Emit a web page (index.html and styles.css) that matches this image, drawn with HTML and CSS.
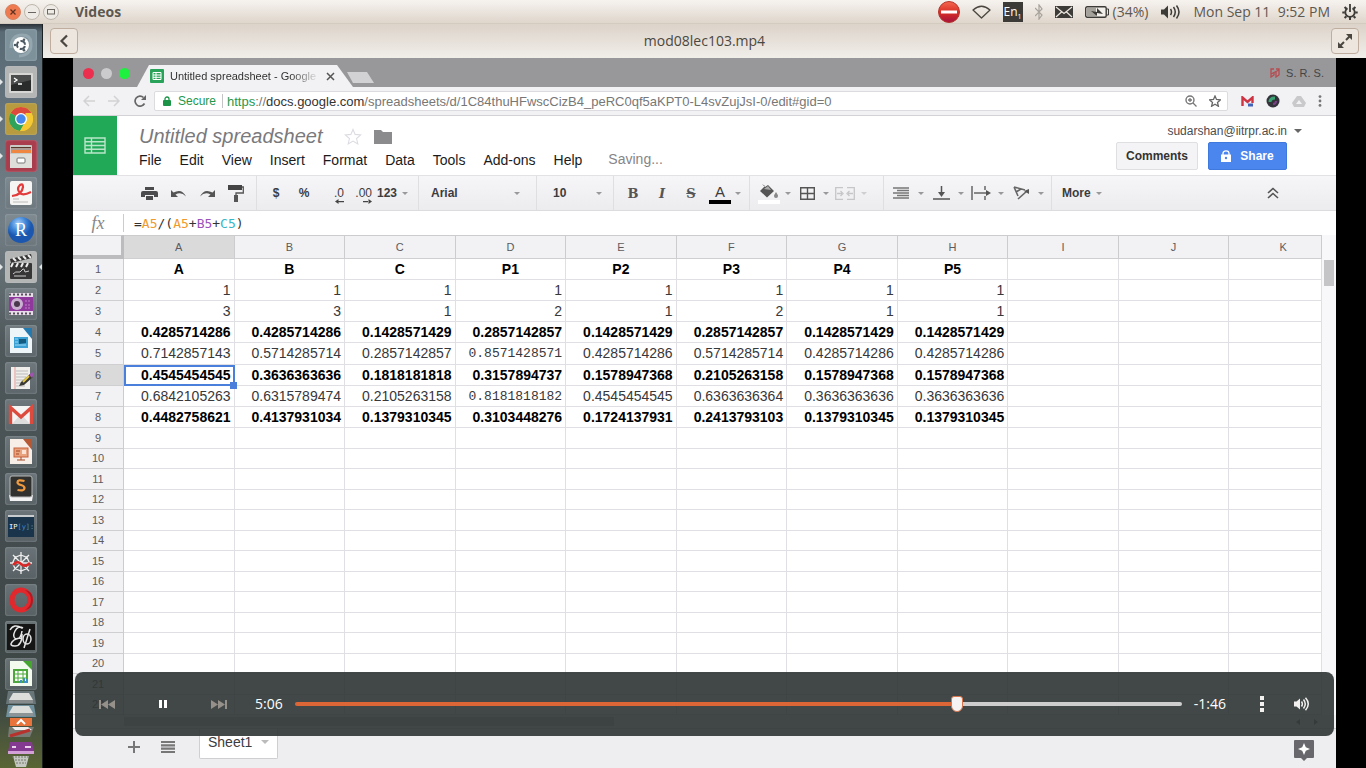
FILE: index.html
```html
<!DOCTYPE html>
<html lang="en">
<head>
<meta charset="utf-8">
<title>Videos</title>
<link rel="stylesheet" href="styles.css">
</head>
<body class="desktop">
<header class="panel">
  <div class="window-buttons">
    <button class="wbtn wbtn-close" aria-label="Close"><svg width="8" height="8" viewBox="0 0 8 8"><path d="M1.5 1.5l5 5M6.500 1.500l-5 5" stroke="#5d3222" stroke-width="1.300"/></svg></button>
    <button class="wbtn" aria-label="Minimize"><svg width="8" height="8" viewBox="0 0 8 8"><path d="M0 4.500h8" stroke="#6b665f"/></svg></button>
    <button class="wbtn" aria-label="Maximize"><svg width="8" height="8" viewBox="0 0 8 8"><rect x=".5" y="1.500" width="7" height="4.500" fill="none" stroke="#6b665f"/></svg></button>
  </div>
  <h1 class="panel-title">Videos</h1>
  <div class="indicators">
    <svg width="22" height="22" viewBox="0 0 22 22"><defs><linearGradient id="stop" x2="0" y2="1"><stop offset="0" stop-color="#f4684f"/><stop offset=".5" stop-color="#d93025"/><stop offset="1" stop-color="#a5123c"/></linearGradient></defs><circle cx="11" cy="11" r="10.500" fill="url(#stop)" stroke="#b5352c"/><rect x="3" y="9.500" width="16" height="3" fill="#fff"/></svg>
    <svg width="19" height="14" viewBox="0 0 19 14"><path d="M1 5Q9.500-2.500 18 5L9.500 13z" fill="none" stroke="#4b4740" stroke-width="1.300" stroke-linejoin="round"/></svg>
    <span class="keyboard">En<sub>1</sub></span>
    <svg width="8" height="16" viewBox="0 0 8 16"><path d="M0 4l7 7-3 4V1l3 4-7 7" fill="none" stroke="#a7a29b" stroke-width="1.200"/></svg>
    <svg width="18" height="12" viewBox="0 0 18 12"><rect width="18" height="12" fill="#3c3b37"/><path d="M1 1l8 6.500L17 1M1 11l5.500-5M17 11l-5.500-5" fill="none" stroke="#eee8e1" stroke-width="1.200"/></svg>
    <span class="battery"><svg width="24" height="12" viewBox="0 0 24 12"><rect x=".7" y=".7" width="20.500" height="10.600" rx="1.500" fill="#f3efea" stroke="#3c3b37" stroke-width="1.400"/><rect x="2" y="2" width="9" height="8" fill="#a5a19b"/><path d="M21.500 3h2v6h-2" fill="none" stroke="#3c3b37"/><path d="M6 5l6 1V2l6 6-6-1v3z" fill="#3c3b37"/></svg>(34%)</span>
    <svg width="21" height="16" viewBox="0 0 21 16"><path d="M1 5.500h3l4-4v13l-4-4H1z" fill="#3c3b37"/><path d="M10.500 5q2 3 0 6M13.500 3q3.500 5 0 10M16.500 1.500q5 6.500 0 13" fill="none" stroke="#3c3b37" stroke-width="1.500"/></svg>
    <time class="clock">Mon Sep 11&nbsp; 9:52 PM</time>
    <svg width="16" height="16" viewBox="0 0 16 16"><path d="M5.500 4.200a4.700 4.700 0 1 0 5 0M8 0v8" fill="none" stroke="#3c3b37" stroke-width="1.800"/><path d="M.3 8.500h2.500M13.200 8.500h2.500M2.600 3l1.800 1.800M13.400 3l-1.800 1.800M2.600 14l1.800-1.800M13.400 14l-1.800-1.800M8 13v3" stroke="#3c3b37" stroke-width="2"/></svg>
  </div>
</header>

<div class="workspace">
<nav class="launcher" aria-label="Launcher">
  <button class="tile tile-dash" aria-label="Dash"><svg viewBox="0 0 32 32"><path d="M6 19Q6 6 17 6q9 0 9 8M26 14q1 12-12 13" fill="none" stroke="#a3b4ba" stroke-width="3" opacity=".6"/><circle cx="16" cy="16" r="8" fill="#fff"/><circle cx="16" cy="16" r="4" fill="none" stroke="#4c5961" stroke-width="2" stroke-dasharray="6.400 2" stroke-dashoffset="-1"/><g fill="#4c5961"><circle cx="10" cy="16" r="1.300"/><circle cx="19" cy="10.800" r="1.300"/><circle cx="19" cy="21.200" r="1.300"/></g></svg></button>
  <button class="tile tile-light running" aria-label="Terminal"><svg viewBox="0 0 32 32"><rect x="4" y="7" width="24" height="20" rx="1" fill="#d6d6d4"/><rect x="6" y="9" width="20" height="16" fill="#2a2c2b"/><path d="M6 9h20v5L6 19z" fill="#4b4d4c"/><path d="M9 12l3 2-3 2M13 18h4" fill="none" stroke="#fff" stroke-width="1.300"/></svg></button>
  <button class="tile tile-gold running" aria-label="Chrome"><svg viewBox="0 0 32 32"><circle cx="16" cy="16" r="12" fill="#f5c934"/><path d="M16 16L5.600 10A12 12 0 0 1 26.400 10z" fill="#dc4a3d"/><path d="M5.600 10A12 12 0 0 0 15 28l5-9-4-3z" fill="#2fa35a"/><path d="M26.400 10A12 12 0 0 1 15 28l5.500-9V10z" fill="#f5c934"/><circle cx="16" cy="16" r="6" fill="#fff"/><circle cx="16" cy="16" r="4.700" fill="#4688ee"/></svg></button>
  <button class="tile tile-red running" aria-label="Files"><svg viewBox="0 0 32 32"><rect x="5" y="5" width="22" height="23" rx="1" fill="#c9c9c5"/><rect x="6" y="7" width="20" height="6" fill="#59382a"/><path d="M6 10h20v3H6z" fill="#ef8740"/><path d="M6 9h20" stroke="#fff"/><rect x="5" y="14" width="22" height="14" fill="#dededb"/><rect x="12" y="18" width="8" height="5" rx="1" fill="#fff" stroke="#777"/></svg></button>
  <button class="tile" aria-label="Document viewer"><svg viewBox="0 0 32 32"><rect x="5" y="4" width="22" height="24" rx="2" fill="#f5f5f3"/><path d="M7 19q10-1 11-9 0-4-3-2-4 4 0 8 3 3 11-1" fill="none" stroke="#e23b3b" stroke-width="2.200"/><path d="M8 22h6M8 25h15" stroke="#bbb"/></svg></button>
  <button class="tile" aria-label="RStudio"><svg viewBox="0 0 32 32"><defs><radialGradient id="ball" cx=".4" cy=".25"><stop offset="0" stop-color="#a9d1fa"/><stop offset=".6" stop-color="#3d84d6"/><stop offset="1" stop-color="#1b57ae"/></radialGradient></defs><circle cx="16" cy="16" r="13" fill="url(#ball)"/><text x="16" y="22" class="r-letter">R</text></svg></button>
  <button class="tile tile-light running focused" aria-label="Videos"><svg viewBox="0 0 32 32"><path d="M5 8l21-5 1 4-21 5z" fill="#333"/><path d="M8 7l3 3M13 6l3 3M18 5l3 3M23 4l3 3" stroke="#eee" stroke-width="2"/><rect x="5" y="12" width="22" height="16" rx="1" fill="#363636"/><path d="M8 12l-2 4M13 12l-2 4M18 12l-2 4M23 12l-2 4" stroke="#eee" stroke-width="2"/><path d="M8 23q3-3 5-2t4-2 3 2l4-1M9 25h12" fill="none" stroke="#ccc" stroke-width="1"/></svg></button>
  <button class="tile" aria-label="Video editor"><svg viewBox="0 0 32 32"><rect x="4" y="5" width="24" height="22" fill="#e6dcea"/><path d="M4 6.500h24M4 25.500h24" stroke="#565058" stroke-width="2" stroke-dasharray="2 2"/><rect x="4" y="9" width="24" height="14" fill="#8f399d"/><circle cx="12" cy="16" r="6" fill="#cab3d0"/><circle cx="12" cy="16" r="3" fill="#49384e"/><path d="M20 13h6M20 17h6M20 20h6" stroke="#c080ca" stroke-dasharray="2 1"/></svg></button>
  <button class="tile" aria-label="Writer"><svg viewBox="0 0 32 32"><path d="M5 3h15l7 7v18H5z" fill="#eef5f9"/><path d="M18 3h9v11z" fill="#247aaf"/><rect x="9" y="12" width="14" height="11" fill="#3ca1d5"/><path d="M14 14h7v4l-7 1z" fill="#155a7f"/><path d="M10 14h3M10 17h3M10 20h11" stroke="#9bd7f1"/></svg></button>
  <button class="tile" aria-label="Text editor"><svg viewBox="0 0 32 32"><rect x="6" y="5" width="19" height="22" fill="#f0eeeb"/><path d="M10 5v22" stroke="#e79a96"/><path d="M11 9h12M11 12h12M11 15h10M11 18h7M11 21h6M11 24h9" stroke="#bbb"/><path d="M14 24l2-4 9-8 3 3-9 8z" fill="#393832"/><path d="M24 13l3-3 2 2-2 4z" fill="#9f54ad"/><path d="M18 20l6-6" stroke="#e5c745" stroke-width="2"/></svg></button>
  <button class="tile" aria-label="Gmail"><svg viewBox="0 0 32 32"><rect x="4" y="7" width="24" height="18" rx="1" fill="#f4f4f4"/><path d="M7 25l9-10 9 10" fill="#ddd"/><path d="M5.500 25V8.500L16 18 26.500 8.500V25" fill="none" stroke="#dd4b3e" stroke-width="3.400"/></svg></button>
  <button class="tile" aria-label="Impress"><svg viewBox="0 0 32 32"><path d="M5 3h15l7 7v18H5z" fill="#f8eee8"/><path d="M18 3h9v11z" fill="#b75834"/><rect x="9" y="12" width="14" height="9" fill="#e8a27e" stroke="#c7623c"/><path d="M11 15h4M11 18h3M16 21v3M12 24h8" stroke="#a44925"/><rect x="17" y="14" width="4" height="4" fill="#fbe2d5"/></svg></button>
  <button class="tile" aria-label="Sublime Text"><svg viewBox="0 0 32 32"><path d="M4 22l1 6h22l1-6z" fill="#f3f3f3"/><rect x="5" y="3" width="22" height="21" rx="2" fill="#30302f" stroke="#b7b9b8"/><path d="M19.500 8q-7-2-7 1.500 0 1.500 3.500 2.500t3.500 3q0 3.500-7 2" fill="none" stroke="#ef9a3e" stroke-width="2.300"/></svg></button>
  <button class="tile" aria-label="IPython"><svg viewBox="0 0 32 32"><rect x="3" y="5" width="26" height="22" fill="#19344b"/><rect x="3" y="5" width="26" height="2" fill="#c9ccce"/><text x="4" y="19" class="ip-letters">IP<tspan fill="#4d8ec3">[y]:</tspan></text></svg></button>
  <button class="tile" aria-label="Spyder"><svg viewBox="0 0 32 32"><g fill="none" stroke="#eee" stroke-width="1.300"><path d="M16 8l6 2.500 2.500 5.500-2.500 5.500-6 2.500-6-2.500L7.500 16l2.500-5.500zM16 5v22M5 16h22M8 8l16 16M24 8L8 24"/></g><path d="M8 18q4-5 8-1t9-1" fill="none" stroke="#db2726" stroke-width="2.500"/></svg></button>
  <button class="tile" aria-label="Opera"><svg viewBox="0 0 32 32"><ellipse cx="16" cy="16" rx="9" ry="10" fill="none" stroke="#e1282d" stroke-width="5"/><path d="M20 6q6 4 6 10t-6 10q8-1 8-10T20 6z" fill="#b51820"/></svg></button>
  <button class="tile" aria-label="Graph tool"><svg viewBox="0 0 32 32"><rect x="2" y="3" width="28" height="26" fill="#151515"/><g fill="none" stroke="#e6e6e6" stroke-width="1.500"><path d="M18 7q-5-3-8 3t1 8q5 0 6-8M5 9q4-7 12-2M17 13q0 12-7 12-6 0-3-4t10-4"/><ellipse cx="22" cy="18" rx="4" ry="5"/><path d="M25 8l-6 19"/></g></svg></button>
  <button class="tile" aria-label="Calc"><svg viewBox="0 0 32 32"><path d="M5 3h15l7 7v18H5z" fill="#f3faee"/><path d="M18 3h9v9z" fill="#46a52e"/><rect x="9" y="12" width="13" height="12" fill="#fff" stroke="#4ca83a" stroke-width="2"/><path d="M9 16h13M9 20h13M13 12v12M18 12v12" stroke="#4ca83a"/><path d="M16 25v-3M19 25v-5M22 25v-4" stroke="#3d91c4" stroke-width="2"/></svg></button>
  <div class="folded">
    <svg viewBox="0 0 32 76"><path d="M3 0h26l2 13H1z" fill="#68767a"/><path d="M8 2h16l4 7H4z" fill="#dcdedc"/><path d="M4 9h24v3H4z" fill="#888c8c"/><path d="M3 14h26l2 12H1z" fill="#71909d"/><path d="M8 15h16l4 7H4z" fill="#dcdedc"/><path d="M4 22h24v3H4z" fill="#8d9495"/><path d="M5 27h22v8H5z" fill="#e8733b"/><path d="M12 33l4-4 4 4" fill="none" stroke="#fff" stroke-width="2"/><path d="M4 36h25l-4 10H3z" fill="#777b73"/><path d="M7 36h16l4 3H10z" fill="#eee"/><path d="M5 45l20-6" stroke="#b8322d" stroke-width="3"/><path d="M5 51h22l2 10H3z" fill="#843a91"/><path d="M3 60h26v3H3z" fill="#d3a0d7"/><path d="M7 56h4M20 56h6" stroke="#ead2ed" stroke-width="2"/><path d="M8 65h16l-3 11H11z" fill="#c5c8c0"/><path d="M7 66h17M10 69h12M11 72h10" stroke="#747b6e" stroke-dasharray="2 1"/></svg>
  </div>
</nav>

<main class="player">
  <div class="player-head">
    <button class="head-btn" aria-label="Back"><svg width="10" height="14" viewBox="0 0 10 14"><path d="M8 1.500L2.500 7 8 12.500" fill="none" stroke="#4b4740" stroke-width="2.200"/></svg></button>
    <h2 class="file-name">mod08lec103.mp4</h2>
    <button class="head-btn" aria-label="Fullscreen"><svg width="14" height="14" viewBox="0 0 14 14"><path d="M8 0h6v6zM0 8v6h6z" fill="#4b4740"/><path d="M8 6l4-4M6 8l-4 4" stroke="#4b4740" stroke-width="2"/></svg></button>
  </div>

  <div class="stage">
  <section class="frame">
    <div class="tabstrip">
      <div class="lights"><i class="light light-red"></i><i class="light light-gray"></i><i class="light light-green"></i></div>
      <div class="tab">
        <svg width="14" height="14" viewBox="0 0 14 14"><rect width="14" height="14" rx="1" fill="#29a35a"/><path d="M3 3.500h8v7H3zM3 6h8M3 8.300h8M6 3.500v7" fill="none" stroke="#fff"/></svg>
        <span class="tab-title">Untitled spreadsheet - Google</span>
        <svg width="9" height="9" viewBox="0 0 9 9"><path d="M1 1l7 7M8 1L1 8" stroke="#555" stroke-width="1.500"/></svg>
      </div>
      <i class="new-tab"></i>
      <div class="profile"><svg width="12" height="10" viewBox="0 0 12 10"><path d="M5 1H2v8l3-2V4M7 1h3v6L7 9V4M2 6l8-4" fill="none" stroke="#b64b50" stroke-width="1.300"/></svg>S. R. S.</div>
    </div>

    <div class="address-row">
      <svg width="12" height="12" viewBox="0 0 12 12"><path d="M12 6H1M6 1L1 6l5 5" fill="none" stroke="#d2d2d4" stroke-width="1.500"/></svg>
      <svg width="12" height="12" viewBox="0 0 12 12"><path d="M0 6h11M6 1l5 5-5 5" fill="none" stroke="#d2d2d4" stroke-width="1.500"/></svg>
      <svg width="14" height="12" viewBox="0 0 14 12"><path d="M11.500 8.500A5 5 0 1 1 10.500 2.500" fill="none" stroke="#666" stroke-width="1.700"/><path d="M13 0v5H8z" fill="#666"/></svg>
      <div class="omnibox">
        <svg width="8" height="10" viewBox="0 0 8 10"><rect y="4" width="8" height="6" rx="1" fill="#1b9448"/><path d="M2 4.500V3a2 2 0 0 1 4 0v1.500" fill="none" stroke="#1b9448" stroke-width="1.300"/></svg>
        <span class="secure">Secure</span>
        <span class="url"><span class="scheme">https</span>://<b class="host">docs.google.com</b>/spreadsheets/d/1C84thuHFwscCizB4_peRC0qf5aKPT0-L4svZujJsI-0/edit#gid=0</span>
        <svg width="12" height="12" viewBox="0 0 12 12"><circle cx="5" cy="5" r="4" fill="none" stroke="#777" stroke-width="1.400"/><path d="M8 8l3.500 3.500M3 5h4M5 3v4" stroke="#777" stroke-width="1.300"/></svg>
        <svg width="12" height="12" viewBox="0 0 24 24"><path d="M12 2l3 7 8 .7-6 5.200 1.800 7.600L12 18.500l-6.800 4L7 14.900 1 9.700 9 9z" fill="none" stroke="#666" stroke-width="2.600"/></svg>
      </div>
      <div class="extensions">
        <svg width="13" height="11" viewBox="0 0 13 11"><rect x="1" y="1" width="11" height="9" fill="#f2eef5"/><path d="M1.500 10V1.500l5 4.500 5-4.500V7" fill="none" stroke="#cf3342" stroke-width="2.400"/><path d="M7 9h5" stroke="#4262b8" stroke-width="3"/></svg>
        <svg width="14" height="14" viewBox="0 0 14 14"><circle cx="7" cy="7" r="6.500" fill="#34323b"/><path d="M4 8q0-4 5-4" fill="none" stroke="#39a374" stroke-width="3"/><path d="M7 10q3 0 3-3" fill="none" stroke="#7b3f86" stroke-width="2"/></svg>
        <svg width="14" height="12" viewBox="0 0 14 12"><path d="M5 1h4l5 7-2 4H2L0 8zM7 5l-3 4h6z" fill="#c9c9cc" fill-rule="evenodd"/></svg>
        <svg width="4" height="12" viewBox="0 0 4 12"><g fill="#777"><circle cx="2" cy="1.600" r="1.400"/><circle cx="2" cy="6" r="1.400"/><circle cx="2" cy="10.400" r="1.400"/></g></svg>
      </div>
    </div>

    <div class="docs-head">
      <div class="docs-logo"><svg width="22" height="17" viewBox="0 0 22 17"><path d="M1 1h20v15H1zM1 4.700h20M1 8.500h20M1 12.300h20M7.500 1v15" fill="none" stroke="#b9e6c9" stroke-width="1.400"/></svg></div>
      <div class="docs-main">
        <div class="title-row">
          <h3 class="doc-title">Untitled spreadsheet</h3>
          <svg width="18" height="17" viewBox="0 0 24 24"><path d="M12 2l3 7 8 .7-6 5.200 1.800 7.600L12 18.500l-6.800 4L7 14.900 1 9.700 9 9z" fill="none" stroke="#dcdbe2" stroke-width="1.500"/></svg>
          <svg width="18" height="15" viewBox="0 0 18 15"><path d="M0 1h7l2 2h9v12H0z" fill="#8b8a8d"/></svg>
        </div>
        <div class="menu-row">
          <button>File</button><button>Edit</button><button>View</button><button>Insert</button><button>Format</button><button>Data</button><button>Tools</button><button>Add-ons</button><button>Help</button>
          <span class="saving">Saving...</span>
        </div>
      </div>
      <div class="docs-account">
        <button class="email">sudarshan@iitrpr.ac.in<i class="caret caret-dark"></i></button>
        <div class="account-actions">
          <button class="btn">Comments</button>
          <button class="btn btn-share"><svg width="10" height="12" viewBox="0 0 10 12"><path d="M0 4.500h10V12H0z" fill="#fff"/><path d="M2 5V3.500a3 2.700 0 0 1 6 0V5" fill="none" stroke="#fff" stroke-width="1.300"/><circle cx="5" cy="8" r="1.200" fill="#4b84ea"/></svg>Share</button>
        </div>
      </div>
    </div>

    <div class="toolbar">
      <div class="group group-file">
        <button class="tool" aria-label="Print"><svg width="17" height="13" viewBox="0 0 17 13"><path d="M4 0h9v3H4zM2 4h13q2 0 2 2v4h-4V8H4v2H0V6q0-2 2-2zM5 9h7v4H5z" fill="#4b4b4d"/></svg></button>
        <button class="tool" aria-label="Undo"><svg width="17" height="9" viewBox="0 0 17 9"><path d="M1 1v7h7L5.500 5.500Q11 2 16 7.500 12-1 3.500 3.500z" fill="#555"/></svg></button>
        <button class="tool" aria-label="Redo"><svg width="17" height="9" viewBox="0 0 17 9"><path d="M16 1v7H9l2.500-2.500Q6 2 1 7.500 5-1 13.500 3.500z" fill="#555"/></svg></button>
        <button class="tool" aria-label="Paint format"><svg width="16" height="17" viewBox="0 0 16 17"><rect width="14" height="5" fill="#444"/><path d="M14 2h1.300v6H8v3" fill="none" stroke="#555" stroke-width="1.300"/><rect x="6" y="10" width="4" height="7" fill="#555"/></svg></button>
      </div>
      <div class="group group-number">
        <button class="tool">$</button><button class="tool">%</button>
        <button class="tool tool-dec">.0<svg width="9" height="5" viewBox="0 0 9 5"><path d="M0 2.500L3.500 0v5zM3 2h6v1.200H3z" fill="#444"/></svg></button>
        <button class="tool tool-dec">.00<svg width="9" height="5" viewBox="0 0 9 5"><path d="M9 2.500L5.500 0v5zM0 2h6v1.200H0z" fill="#444"/></svg></button>
        <button class="tool tool-wide">123<i class="caret"></i></button>
      </div>
      <div class="group group-font"><select class="pick" aria-label="Font"><option>Arial</option></select><i class="caret"></i></div>
      <div class="group group-size"><select class="pick" aria-label="Font size"><option>10</option></select><i class="caret"></i></div>
      <div class="group group-style">
        <button class="tool tool-slab">B</button><button class="tool tool-slab tool-italic">I</button><button class="tool tool-slab tool-strike">S</button>
        <button class="tool tool-color">A</button><i class="caret"></i>
      </div>
      <div class="group group-cell">
        <button class="tool tool-fill" aria-label="Fill color"><svg width="18" height="14" viewBox="0 0 18 14"><path d="M2 0l3 3 3-2 6 6-7 6.500L0 7l5-5" fill="#555"/><path d="M4 5l4-3 3 4z" fill="#aaa"/><path d="M16 8q2 3 2 4a2 2 0 0 1-4 0q0-1 2-4z" fill="#888"/></svg></button><i class="caret"></i>
        <button class="tool" aria-label="Borders"><svg width="15" height="13" viewBox="0 0 15 13"><path d="M.7.700h13.600v11.600H.7zM7.500 0v13M0 6.500h15" fill="none" stroke="#555" stroke-width="1.400"/></svg></button><i class="caret"></i>
        <button class="tool" aria-label="Merge cells"><svg width="20" height="13" viewBox="0 0 20 13"><path d="M8 .7H.7v11.600H8M12 .7h7.300v11.600H12M2 6.500h5M5.500 4L8 6.500 5.500 9M18 6.500h-5M14.500 4L12 6.500 14.500 9" fill="none" stroke="#c6c6c9" stroke-width="1.300"/></svg></button><i class="caret caret-pale"></i>
      </div>
      <div class="group group-align">
        <button class="tool" aria-label="Horizontal align"><svg width="16" height="12" viewBox="0 0 16 12"><path d="M0 1h16M4 3.500h12M0 6h16M4 8.500h12M0 11h16" stroke="#777" stroke-width="1.600"/></svg></button><i class="caret"></i>
        <button class="tool" aria-label="Vertical align"><svg width="17" height="14" viewBox="0 0 17 14"><path d="M8.500 0v8M0 13h17" stroke="#555" stroke-width="1.500"/><path d="M5 6h7l-3.500 5z" fill="#555"/></svg></button><i class="caret"></i>
        <button class="tool" aria-label="Wrap"><svg width="20" height="14" viewBox="0 0 20 14"><path d="M1 0v14M14 0v4M14 10v4M3 7h14" stroke="#666" stroke-width="1.500"/><path d="M15 4l5 3-5 3z" fill="#555"/></svg></button><i class="caret"></i>
        <button class="tool" aria-label="Rotate"><svg width="17" height="14" viewBox="0 0 17 14"><path d="M1 1l11 3M1 1l4 9M3 6l5-3" fill="none" stroke="#666" stroke-width="1.600"/><path d="M5 13l9-8" stroke="#666" stroke-width="1.600"/><path d="M16 3v5l-5-3z" fill="#555"/></svg></button><i class="caret"></i>
      </div>
      <div class="group group-more"><button class="tool tool-wide">More<i class="caret"></i></button></div>
      <button class="tool tool-collapse" aria-label="Hide menus"><svg width="12" height="12" viewBox="0 0 12 12"><path d="M1 6l5-4.500L11 6M1 11l5-4.500 5 4.500" fill="none" stroke="#555" stroke-width="1.600"/></svg></button>
    </div>

    <div class="formula-bar">
      <span class="fx">fx</span>
      <code class="formula">=<span class="ref-a">A5</span>/(<span class="ref-a">A5</span>+<span class="ref-b">B5</span>+<span class="ref-c">C5</span>)</code>
    </div>

    <div class="grid-area">
      <table class="grid">
        <colgroup><col class="col-head"><col class="col" span="10"><col></colgroup>
        <thead><tr><th class="corner"></th><th class="current">A</th><th>B</th><th>C</th><th>D</th><th>E</th><th>F</th><th>G</th><th>H</th><th>I</th><th>J</th><th class="cut">K</th></tr></thead>
        <tbody>
          <tr class="bold center"><th>1</th><td>A</td><td>B</td><td>C</td><td>P1</td><td>P2</td><td>P3</td><td>P4</td><td>P5</td><td></td><td></td><td></td></tr>
          <tr><th>2</th><td>1</td><td>1</td><td>1</td><td>1</td><td>1</td><td>1</td><td>1</td><td>1</td><td></td><td></td><td></td></tr>
          <tr><th>3</th><td>3</td><td>3</td><td>1</td><td>2</td><td>1</td><td>2</td><td>1</td><td>1</td><td></td><td></td><td></td></tr>
          <tr class="bold"><th>4</th><td>0.4285714286</td><td>0.4285714286</td><td>0.1428571429</td><td>0.2857142857</td><td>0.1428571429</td><td>0.2857142857</td><td>0.1428571429</td><td>0.1428571429</td><td></td><td></td><td></td></tr>
          <tr class="tall"><th>5</th><td>0.7142857143</td><td>0.5714285714</td><td>0.2857142857</td><td class="mono">0.8571428571</td><td>0.4285714286</td><td>0.5714285714</td><td>0.4285714286</td><td>0.4285714286</td><td></td><td></td><td></td></tr>
          <tr class="bold"><th class="current">6</th><td class="selected">0.4545454545</td><td>0.3636363636</td><td>0.1818181818</td><td>0.3157894737</td><td>0.1578947368</td><td>0.2105263158</td><td>0.1578947368</td><td>0.1578947368</td><td></td><td></td><td></td></tr>
          <tr><th>7</th><td>0.6842105263</td><td>0.6315789474</td><td>0.2105263158</td><td class="mono">0.8181818182</td><td>0.4545454545</td><td>0.6363636364</td><td>0.3636363636</td><td>0.3636363636</td><td></td><td></td><td></td></tr>
          <tr class="bold"><th>8</th><td>0.4482758621</td><td>0.4137931034</td><td>0.1379310345</td><td>0.3103448276</td><td>0.1724137931</td><td>0.2413793103</td><td>0.1379310345</td><td>0.1379310345</td><td></td><td></td><td></td></tr>
        </tbody>
        <tbody class="empty-rows">
          <tr><th>9<td><td><td><td><td><td><td><td><td><td><td></tr>
          <tr><th>10<td><td><td><td><td><td><td><td><td><td><td></tr>
          <tr><th>11<td><td><td><td><td><td><td><td><td><td><td></tr>
          <tr><th>12<td><td><td><td><td><td><td><td><td><td><td></tr>
          <tr><th>13<td><td><td><td><td><td><td><td><td><td><td></tr>
          <tr><th>14<td><td><td><td><td><td><td><td><td><td><td></tr>
          <tr><th>15<td><td><td><td><td><td><td><td><td><td><td></tr>
          <tr><th>16<td><td><td><td><td><td><td><td><td><td><td></tr>
          <tr><th>17<td><td><td><td><td><td><td><td><td><td><td></tr>
          <tr><th>18<td><td><td><td><td><td><td><td><td><td><td></tr>
          <tr><th>19<td><td><td><td><td><td><td><td><td><td><td></tr>
          <tr><th>20<td><td><td><td><td><td><td><td><td><td><td></tr>
          <tr><th>21<td><td><td><td><td><td><td><td><td><td><td></tr>
          <tr><th>22<td><td><td><td><td><td><td><td><td><td><td></tr>
        </tbody>
      </table>
      <div class="vscroll"><i class="vthumb"></i></div>
    </div>
    <div class="hscroll"><i class="hthumb"></i><svg width="22" height="6" viewBox="0 0 22 6"><path d="M4 0v6L0 3zM18 0v6l4-3z" fill="#777"/></svg></div>

    <footer class="sheet-bar">
      <button class="sheet-btn" aria-label="Add sheet"><svg width="12" height="12" viewBox="0 0 12 12"><path d="M6 0v12M0 6h12" stroke="#777" stroke-width="2"/></svg></button>
      <button class="sheet-btn" aria-label="All sheets"><svg width="14" height="12" viewBox="0 0 14 12"><path d="M0 1h14M0 4.300h14M0 7.600h14M0 11h14" stroke="#777" stroke-width="2.200"/></svg></button>
      <button class="sheet-tab">Sheet1<i class="caret"></i></button>
      <button class="explore" aria-label="Explore"><svg width="20" height="21" viewBox="0 0 20 21"><path d="M1 0h18q1 0 1 1v16q0 1-1 1h-6l-3 3-3-3H1q-1 0-1-1V1q0-1 1-1z" fill="#68676b"/><path d="M10 3l1.800 4.200L16 9l-4.200 1.800L10 15l-1.800-4.200L4 9l4.200-1.800z" fill="#fff"/></svg></button>
    </footer>
  </section>

  <div class="controls">
    <button class="ctl" aria-label="Previous"><svg width="16" height="9" viewBox="0 0 16 9"><path d="M0 0h2v9H0zM9 0v9L2 4.500zM16 0v9L9 4.500z" fill="#96908a"/></svg></button>
    <button class="ctl" aria-label="Pause"><svg width="8" height="8" viewBox="0 0 8 8"><path d="M0 0h3v8H0zM5 0h3v8H5z" fill="#fff"/></svg></button>
    <button class="ctl" aria-label="Next"><svg width="16" height="9" viewBox="0 0 16 9"><path d="M14 0h2v9h-2zM7 0v9l7-4.500zM0 0v9l7-4.500z" fill="#96908a"/></svg></button>
    <time class="elapsed">5:06</time>
    <input class="seek" type="range" min="0" max="100" value="75" aria-label="Position">
    <time class="remaining">-1:46</time>
    <div class="ctl-end">
      <button class="ctl" aria-label="More options"><svg width="4" height="16" viewBox="0 0 4 16"><path d="M0 0h4v4H0zM0 6h4v4H0zM0 12h4v4H0z" fill="#f2f1ef"/></svg></button>
      <button class="ctl" aria-label="Volume"><svg width="16" height="14" viewBox="0 0 16 14"><path d="M0 4.500h2.500L6 1.500v11L2.500 9.500H0z" fill="#f2f1ef"/><path d="M7.500 4.500q1.700 2.500 0 5M9.500 2.500q3.500 4.500 0 9M11.500.8q5.500 6.200 0 12.400" fill="none" stroke="#f2f1ef" stroke-width="1.500"/></svg></button>
    </div>
  </div>
  </div>
</main>
</div>
</body>
</html>
```

FILE: styles.css
```css
* { box-sizing: border-box; }

button {
  margin: 0;
  padding: 0;
  border: 0;
  background: none;
  color: inherit;
  font: inherit;
}

svg { display: block; flex: none; }

.desktop {
  display: flex;
  flex-direction: column;
  min-height: 100vh;
  margin: 0;
  background: #000;
  font-family: "Liberation Sans", Arial, sans-serif;
}

/* Top panel */
.panel {
  display: flex;
  align-items: center;
  height: 24px;
  padding: 0 8px 0 5px;
  background: linear-gradient(#f6f3ef, #dfd6cc);
  border-bottom: 1px solid #d3cac0;
  color: #5d5850;
  font: 14px/24px "Open Sans", "Noto Sans", sans-serif;
}

.window-buttons { display: flex; gap: 3px; }

.wbtn {
  display: flex;
  align-items: center;
  justify-content: center;
  width: 16px;
  height: 16px;
  border: 1px solid #bdb6ac;
  border-radius: 50%;
  background: #eeeae5;
}

.wbtn-close { background: #ef7a50; border-color: #d9815f; }

.panel-title {
  flex: 1;
  margin: 0 0 0 16px;
  font-size: 14px;
  font-weight: 700;
  line-height: 22px;
}

.indicators { display: flex; align-items: center; gap: 12px; }

.keyboard {
  width: 20px;
  height: 20px;
  background: #3c3b37;
  color: #fff;
  font-size: 12px;
  line-height: 20px;
  text-align: center;
}

.keyboard sub { font-size: 7px; line-height: 1; }
.battery { display: flex; align-items: center; gap: 4px; }

/* Launcher */
.workspace { display: flex; flex: 1; }

.launcher {
  display: flex;
  flex: none;
  flex-direction: column;
  align-items: center;
  gap: 5px;
  width: 43px;
  padding: 5px 1px 0 0;
  background: linear-gradient(#2b3238, #5a6b76 8px, #727e85 200px, #4f595c 320px, #41494b 560px, #3d4744 680px, #5a6534);
  border-right: 1px solid #1d2122;
}

.tile {
  position: relative;
  width: 32px;
  height: 32px;
  border-radius: 3px;
  background: linear-gradient(#8b959b88, #6c757a88);
  box-shadow: inset 0 0 2px #c8d0d488;
}

.tile-dash { background: #7d919b; }
.tile-light { background: #b4b5b5; }
.tile-gold { background: #b79b3e; }
.tile-red { background: #a93d4d; }

.running::before,
.focused::after {
  content: "";
  position: absolute;
  top: 13px;
  left: -5px;
  border: 3px solid transparent;
  border-left-color: #e4e7e8;
  border-right-width: 0;
}

.focused::after {
  right: -5px;
  left: auto;
  border-right: 3px solid #e4e7e8;
  border-left-width: 0;
}

.r-letter { fill: #fff; font: 18px "Liberation Serif", serif; text-anchor: middle; }
.ip-letters { fill: #fff; font: 7px "DejaVu Sans Mono", monospace; }
.folded { width: 32px; margin-top: -4px; }

/* Player */
.player { display: flex; flex: 1; flex-direction: column; min-width: 0; }

.player-head {
  display: flex;
  align-items: center;
  justify-content: space-between;
  height: 34px;
  padding: 0 7px;
  background: linear-gradient(#dcd3c9, #f1eeea);
}

.head-btn {
  display: flex;
  align-items: center;
  justify-content: center;
  width: 28px;
  height: 26px;
  border: 1px solid #bfae9f;
  border-radius: 4px;
  background: #ece6df;
}

.file-name {
  margin: 0;
  color: #4b4740;
  font: 14px/20px "Open Sans", "Noto Sans", sans-serif;
}

.stage { position: relative; display: flex; flex: 1; padding: 0 30px; background: #000; }

.frame {
  display: flex;
  flex: 1;
  flex-direction: column;
  min-width: 0;
  background: #fff;
}

/* Browser chrome */
.tabstrip { display: flex; align-items: flex-end; height: 29px; background: #98989a; }
.lights { display: flex; gap: 7px; padding: 0 7px 8px 10px; }
.light { width: 11px; height: 11px; border-radius: 50%; }
.light-red { background: #ec2f4e; }
.light-gray { background: #cbcacc; }
.light-green { background: #1df03f; }

.tab {
  display: flex;
  align-items: center;
  gap: 6px;
  width: 216px;
  height: 22px;
  padding-left: 13px;
  background: #f2f1f3;
  clip-path: polygon(12px 0, 200px 0, 100% 100%, 0 100%);
  color: #333;
  font-size: 11px;
}

.tab-title {
  width: 150px;
  overflow: hidden;
  white-space: nowrap;
  -webkit-mask-image: linear-gradient(90deg, #000 120px, transparent);
  mask-image: linear-gradient(90deg, #000 120px, transparent);
}

.new-tab {
  width: 27px;
  height: 11px;
  margin: 0 0 4px -6px;
  background: #d2d1d3;
  clip-path: polygon(0 0, 20px 0, 100% 100%, 6px 100%);
}

.profile {
  display: flex;
  align-items: center;
  gap: 5px;
  margin-left: auto;
  padding: 0 12px 8px 0;
  color: #444;
  font-size: 11px;
}

.address-row {
  display: flex;
  align-items: center;
  gap: 13px;
  height: 29px;
  padding: 0 14px 0 10px;
  background: #f2f1f3;
  border-bottom: 1px solid #d3d2d6;
}

.omnibox {
  display: flex;
  flex: 1;
  align-items: center;
  gap: 12px;
  height: 20px;
  margin-left: -6px;
  padding: 0 6px 0 8px;
  border: 1px solid #dcdbdf;
  border-radius: 2px;
  background: #fff;
  color: #777;
  font-size: 13px;
}

.secure {
  margin: 0 -8px;
  padding: 0 6px 0 3px;
  border-right: 1px solid #c4c4c6;
  color: #1f984c;
  font-size: 12px;
}

.omnibox .url { flex: 1; }
.scheme { color: #1f984c; }
.host { color: #333; font-weight: 400; }
.extensions { display: flex; align-items: center; gap: 12px; }

/* Document header */
.docs-head { display: flex; height: 59px; background: #fff; }

.docs-logo {
  display: flex;
  align-items: center;
  justify-content: center;
  width: 44px;
  background: #22a958;
}

.docs-main { flex: 1; padding: 8px 0 0 22px; }
.title-row { display: flex; align-items: center; gap: 12px; height: 24px; }

.doc-title {
  margin: 0 10px 0 0;
  color: #7a797c;
  font-size: 20px;
  font-style: italic;
  font-weight: 400;
}

.menu-row { display: flex; align-items: center; gap: 18px; height: 24px; color: #1b1b1d; font-size: 14px; }
.saving { margin: 0 0 2px 8px; color: #868588; }

.docs-account {
  display: flex;
  flex-direction: column;
  align-items: flex-end;
  gap: 3px;
  padding: 7px 34px 0 0;
  font-size: 12px;
}

.email { display: flex; align-items: center; gap: 7px; height: 16px; color: #4c4b4e; }
.account-actions { display: flex; gap: 10px; padding-right: 15px; }

.btn {
  display: flex;
  align-items: center;
  justify-content: center;
  gap: 9px;
  width: 82px;
  height: 28px;
  border: 1px solid #dfdee1;
  border-radius: 2px;
  background: #f4f3f5;
  color: #333;
  font-weight: 700;
}

.btn-share { width: 79px; border-color: #4079de; background: #4b86ee; color: #fff; }

.caret {
  flex: none;
  width: 0;
  height: 0;
  border: 3px solid transparent;
  border-top-color: #99989b;
  border-bottom-width: 0;
}

.caret-dark { border-width: 4px 4px 0; border-top-color: #666; }
.caret-pale { border-top-color: #cfced1; }

/* Toolbar */
.toolbar {
  display: flex;
  height: 36px;
  background: linear-gradient(#f6f5f7, #ececee);
  border-top: 1px solid #e2e1e4;
  border-bottom: 1px solid #dcdbde;
}

.group {
  display: flex;
  flex: none;
  align-items: center;
  border-right: 1px solid #dfdee1;
  color: #3d3c3f;
  font-size: 12px;
  font-weight: 700;
}

.tool {
  display: flex;
  flex: none;
  align-items: center;
  justify-content: center;
  width: 28px;
  height: 28px;
}

.group-file { width: 184px; padding-left: 62px; gap: 1px; }
.group-number { width: 162px; padding-left: 5px; }
.group-font { width: 118px; padding: 0 16px 0 12px; }
.group-size { width: 77px; padding: 0 11px 0 16px; }
.group-style { width: 136px; padding-left: 5px; gap: 1px; }
.group-cell { width: 134px; padding-left: 5px; gap: 2px; }
.group-align { width: 168px; padding-left: 3px; gap: 3px; }
.group-more { padding-left: 7px; border-right: 0; }
.tool-wide { width: auto; gap: 5px; padding-left: 3px; font-size: 12px; }
.tool-dec { flex-direction: column; align-items: flex-end; padding: 4px 2px 0 0; font-weight: 400; line-height: 12px; }
.tool-slab { font: 700 13px "DejaVu Serif", serif; color: #555; }
.tool-italic { font-style: italic; }
.tool-strike { text-decoration: line-through; }

.tool-color::after,
.tool-fill::after {
  content: "";
  flex: none;
  width: 22px;
  height: 4px;
  background: #000;
}

.tool-color,
.tool-fill { flex-direction: column; padding-top: 2px; font-size: 15px; font-weight: 400; line-height: 16px; }
.tool-fill::after { margin-top: 2px; background: #fff; }
.tool-collapse { margin-left: auto; margin-right: 49px; align-self: center; }

.pick {
  flex: 1;
  min-width: 0;
  padding: 0;
  border: 0;
  appearance: none;
  background: none;
  color: inherit;
  font: inherit;
}

.formula-bar { display: flex; align-items: center; height: 24px; }

.fx {
  width: 51px;
  border-right: 1px solid #ccc;
  color: #888;
  font: italic 18px/18px "Liberation Serif", serif;
  text-align: center;
}

.formula { padding-left: 10px; color: #333; font: 13px "DejaVu Sans Mono", monospace; }
.ref-a { color: #f09a2e; }
.ref-b { color: #9a52bd; }
.ref-c { color: #38b6c8; }

/* Cells */
.grid-area { display: flex; }

.grid {
  flex: 1;
  width: 0;
  border-spacing: 0;
  table-layout: fixed;
  color: #38373a;
  font-size: 14px;
  line-height: 19px;
}

.col-head { width: 51px; }
.col { width: 8.85%; }

.grid th {
  padding: 0;
  border-right: 1px solid #cccbce;
  border-bottom: 1px solid #cfced1;
  background: #f2f1f3;
  color: #5c5b5e;
  font-size: 11px;
  font-weight: 400;
}

.grid thead th { height: 24px; border-top: 1px solid #cccbce; }
.grid .current { background: #dadadb; }
.grid .corner { border-right: 3px solid #bcbbbe; border-bottom: 4px solid #bcbbbe; }
.grid thead .cut { padding-left: 16px; }

.grid td {
  position: relative;
  height: 21px;
  padding: 0 3px 0 0;
  border-right: 1px solid #e0dfe3;
  border-bottom: 1px solid #e0dfe3;
  text-align: right;
}

.grid .tall td { height: 22px; }
.grid .bold td { color: #000; font-weight: 700; }
.grid .center td { padding: 0; text-align: center; }
.grid .mono { font-family: "Liberation Mono", monospace; font-size: 13px; }
.grid .empty-rows tr:nth-child(even) td { height: 20px; }
.grid .selected { outline: 2px solid #4a7fdb; outline-offset: -2px; }

.selected::after {
  content: "";
  position: absolute;
  right: -3px;
  bottom: -4px;
  z-index: 1;
  width: 7px;
  height: 7px;
  background: #4a7fdb;
}

.vscroll { flex: none; width: 14px; padding: 25px 2px 0; background: #f8f7f9; }
.vthumb { display: block; height: 26px; background: #c5c4c7; }

.hscroll {
  display: flex;
  align-items: center;
  justify-content: space-between;
  height: 13px;
  padding: 0 18px 0 51px;
  background: #f2f1f3;
}

.hthumb { width: 41%; height: 9px; background: #c5c4c7; }

.sheet-bar {
  display: flex;
  flex: 1;
  align-items: flex-start;
  min-height: 40px;
  padding: 0 22px 0 44px;
  background: #eeedf0;
  border-top: 1px solid #d3d2d6;
}

.sheet-btn { display: flex; align-items: center; justify-content: center; width: 34px; height: 36px; }

.sheet-tab {
  display: flex;
  align-items: center;
  gap: 9px;
  height: 30px;
  margin-left: 14px;
  padding: 0 8px 4px;
  border: 1px solid #cfced1;
  border-top: 0;
  border-radius: 0 0 2px 2px;
  background: #fff;
  color: #3c3b3e;
  font-size: 14px;
}

.sheet-tab .caret { border-width: 4px 4px 0; border-top-color: #bbb; }
.explore { margin: 11px 0 0 auto; }

/* Playback overlay */
.controls {
  position: absolute;
  right: 32px;
  bottom: 32px;
  left: 32px;
  z-index: 2;
  display: flex;
  align-items: center;
  gap: 16px;
  height: 64px;
  padding: 0 12px;
  border-radius: 8px;
  background: rgba(46, 52, 51, .9);
  color: #fff;
  font: 14px/20px "Open Sans", "Noto Sans", sans-serif;
}

.ctl { display: flex; align-items: center; justify-content: center; width: 40px; height: 40px; }
.ctl-end { display: flex; }

.seek {
  flex: 1;
  height: 18px;
  margin: 0 -4px;
  appearance: none;
  background: none;
}

.seek::-webkit-slider-runnable-track {
  height: 4px;
  border-radius: 2px;
  background: linear-gradient(90deg, #dd6637 75%, #cfcecf 75%);
}

.seek::-webkit-slider-thumb {
  width: 12px;
  height: 16px;
  margin-top: -6px;
  border: 1px solid #d9754d;
  border-radius: 3px 3px 6px 6px;
  appearance: none;
  background: #f5f4f3;
}
```
